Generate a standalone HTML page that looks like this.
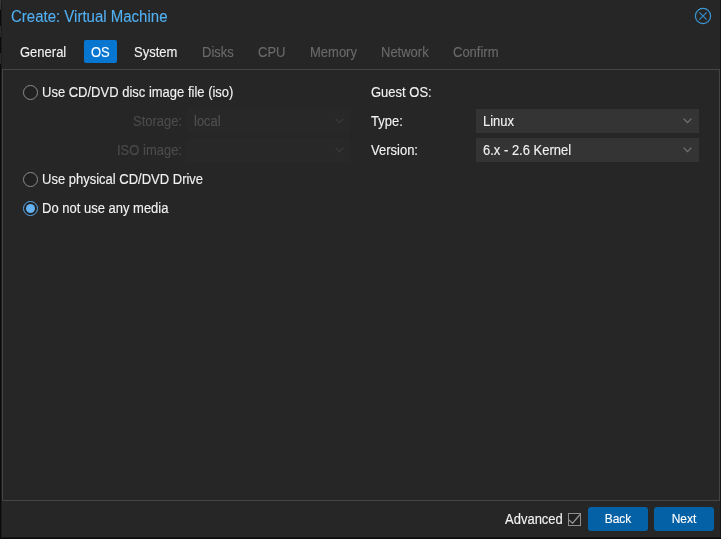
<!DOCTYPE html>
<html><head><meta charset="utf-8">
<style>
html,body{margin:0;padding:0;}
body{width:721px;height:539px;background:#151515;position:relative;overflow:hidden;font-family:"Liberation Sans",sans-serif;font-size:13px;color:#f2f2f2;}
.t{position:absolute;white-space:nowrap;line-height:13px;will-change:transform;transform:scaleY(1.1);transform-origin:0 11px;-webkit-text-stroke:0.12px currentColor;}
#dlg{position:absolute;left:2px;top:0;width:718px;height:537px;background:#262626;}
#title{left:11px;top:9px;font-size:15px;line-height:15px;color:#52b0f2;transform-origin:0 12.7px;transform:scaleY(1.05);}
.tab{position:absolute;white-space:nowrap;line-height:13px;top:46px;will-change:transform;transform:scaleY(1.1);transform-origin:0 11px;-webkit-text-stroke:0.12px currentColor;}
.dis{color:#6a6a6a;}
#ostab{position:absolute;left:84px;top:40px;width:33px;height:23px;background:#0676d0;border-radius:2px;}
#body{position:absolute;left:2px;top:69px;width:718px;height:431px;box-sizing:border-box;border:1px solid #444;border-bottom:none;border-right:1px solid #444;}
#foot{position:absolute;left:2px;top:500px;width:718px;height:1px;background:#444;}
.radio{position:absolute;width:13px;height:13px;border:1px solid #8c8c8c;border-radius:50%;box-sizing:content-box;background:#212121;}
.combo{position:absolute;height:24px;background:#343434;}
.dcombo{position:absolute;height:24px;background:#282828;}
.chev{position:absolute;}
.btn{position:absolute;top:507px;height:24px;background:#0561a5;border-radius:3px;}
.bt{width:60px;text-align:center;font-size:12px;line-height:13px;color:#fff;}
</style></head><body>
<div id="dlg"></div>
<div style="position:absolute;left:0;top:0;width:1px;height:539px;background:#0a0a0a"></div>
<div style="position:absolute;left:0;top:0;width:1px;height:10px;background:linear-gradient(#3a3a3a,#2e2e2e)"></div>
<div style="position:absolute;left:0;top:26px;width:1px;height:11px;background:#2a2a2a"></div>
<div style="position:absolute;left:0;top:53px;width:1px;height:11px;background:#2a2a2a"></div>
<div style="position:absolute;left:1px;top:0;width:1px;height:539px;background:#1c1c1c"></div>
<div style="position:absolute;left:0;top:538px;width:721px;height:1px;background:#0a0a0a"></div>
<div class="t" id="title">Create: Virtual Machine</div>
<svg style="position:absolute;left:694px;top:7px" width="18" height="18" viewBox="0 0 18 18">
<circle cx="9" cy="9" r="7.6" fill="none" stroke="#3c98d4" stroke-width="1.2"/>
<path d="M5.3 5.3L12.7 12.7M12.7 5.3L5.3 12.7" stroke="#3890cc" stroke-width="1.05"/>
</svg>

<div id="ostab"></div>
<div class="tab" id="tg" style="left:20px">General</div>
<div class="tab" id="tos" style="left:91px;color:#fff">OS</div>
<div class="tab" id="tsys" style="left:134px">System</div>
<div class="tab dis" id="tdisk" style="left:202px">Disks</div>
<div class="tab dis" id="tcpu" style="left:258px">CPU</div>
<div class="tab dis" id="tmem" style="left:310px">Memory</div>
<div class="tab dis" id="tnet" style="left:381px">Network</div>
<div class="tab dis" id="tconf" style="left:453px">Confirm</div>

<div id="body"></div>
<div id="foot"></div>

<div class="radio" style="left:23px;top:85px"></div>
<div class="t" id="r1" style="left:42px;top:86px">Use CD/DVD disc image file (iso)</div>
<div class="t dis" id="lst" style="right:538.5px;top:115px;color:#4c4c4c">Storage:</div>
<div class="dcombo" style="left:187px;top:109px;width:163px"></div>
<div class="t" id="loc" style="left:194px;top:115px;color:#505050">local</div>
<div class="t dis" id="liso" style="right:538.5px;top:144px;color:#4c4c4c">ISO image:</div>
<div class="dcombo" style="left:187px;top:138px;width:163px"></div>
<svg class="chev" style="left:334.5px;top:118px" width="9" height="6" viewBox="0 0 9 6"><path d="M0.6 0.6L4.5 4.6L8.4 0.6" fill="none" stroke="#3a3a3a" stroke-width="1.25"/></svg>
<svg class="chev" style="left:334.5px;top:147px" width="9" height="6" viewBox="0 0 9 6"><path d="M0.6 0.6L4.5 4.6L8.4 0.6" fill="none" stroke="#3a3a3a" stroke-width="1.25"/></svg>

<div class="radio" style="left:23px;top:172px"></div>
<div class="t" id="r2" style="left:42px;top:173px">Use physical CD/DVD Drive</div>
<div class="radio" style="left:23px;top:201px;border-color:#5aa8ea"></div>
<div style="position:absolute;left:26px;top:204px;width:9px;height:9px;border-radius:50%;background:#64b2f2"></div>
<div class="t" id="r3" style="left:42px;top:202px">Do not use any media</div>

<div class="t" id="gos" style="left:371px;top:86px">Guest OS:</div>
<div class="t" id="ltype" style="left:371px;top:115px">Type:</div>
<div class="combo" style="left:476px;top:109px;width:223px"></div>
<div class="t" id="linux" style="left:483px;top:115px">Linux</div>
<svg class="chev" style="left:682.5px;top:118px" width="9" height="6" viewBox="0 0 9 6"><path d="M0.6 0.6L4.5 4.6L8.4 0.6" fill="none" stroke="#747474" stroke-width="1.25"/></svg>
<div class="t" id="lver" style="left:371px;top:144px">Version:</div>
<div class="combo" style="left:476px;top:138px;width:223px"></div>
<div class="t" id="kern" style="left:483px;top:144px">6.x - 2.6 Kernel</div>
<svg class="chev" style="left:682.5px;top:147px" width="9" height="6" viewBox="0 0 9 6"><path d="M0.6 0.6L4.5 4.6L8.4 0.6" fill="none" stroke="#747474" stroke-width="1.25"/></svg>

<div class="t" id="adv" style="left:505px;top:513px">Advanced</div>
<div style="position:absolute;left:568px;top:513px;width:11px;height:11px;border:1px solid #8f8f8f;background:#202020"></div>
<svg style="position:absolute;left:568px;top:513px" width="13" height="13" viewBox="0 0 13 13"><path d="M1 7L4.6 10.2L12 1.5" fill="none" stroke="#8f8f8f" stroke-width="1.3"/></svg>
<div class="btn" style="left:588px;width:60px"></div>
<div class="t bt" id="back" style="left:588px;top:513px;">Back</div>
<div class="btn" style="left:654px;width:60px"></div>
<div class="t bt" id="next" style="left:654px;top:513px;">Next</div>
</body></html>
